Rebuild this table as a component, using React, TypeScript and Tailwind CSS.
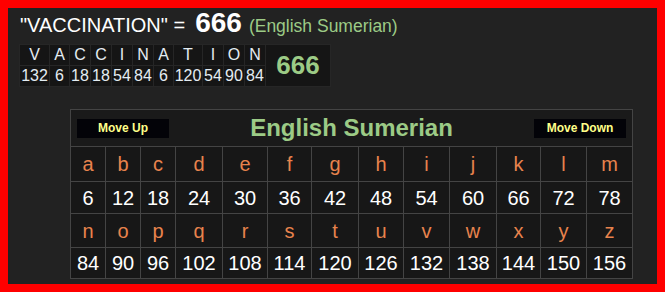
const word = [
  { ch: 'V', val: 132, w: 'w-[29px]' },
  { ch: 'A', val: 6, w: 'w-[19px]' },
  { ch: 'C', val: 18, w: 'w-[20px]' },
  { ch: 'C', val: 18, w: 'w-[20px]' },
  { ch: 'I', val: 54, w: 'w-[20px]' },
  { ch: 'N', val: 84, w: 'w-[20px]' },
  { ch: 'A', val: 6, w: 'w-[19px]' },
  { ch: 'T', val: 120, w: 'w-[28px]' },
  { ch: 'I', val: 54, w: 'w-[20px]' },
  { ch: 'O', val: 90, w: 'w-[20px]' },
  { ch: 'N', val: 84, w: 'w-[20px]' },
];

const letters = 'abcdefghijklmnopqrstuvwxyz'.split('');

function Letter({ ch }: { ch: string }) {
  return <div className="bg-[#171717] flex items-center justify-center text-[20px] text-[#e8834d]">{ch}</div>;
}

function Num({ n }: { n: number }) {
  return <div className="bg-[#171717] flex items-center justify-center text-[20px] text-white">{n}</div>;
}

export default function App() {
  const top = letters.slice(0, 13);
  const bottom = letters.slice(13);
  return (
    <div className="w-[665px] h-[292px] border-8 border-[#ff0000] bg-[#222222] font-['Liberation_Sans',Arial,sans-serif] overflow-hidden">
      <div className="h-[35px] pl-[12px] pt-[1px] flex items-baseline leading-none whitespace-nowrap">
        <span className="text-[20px] text-white">"VACCINATION" =</span>
        <span className="ml-[10px] text-[28px] font-bold text-white">666</span>
        <span className="ml-[7px] text-[17.5px] text-[#9ccb86]">(English Sumerian)</span>
      </div>

      <div className="ml-[11px] inline-flex bg-[#262626] p-px gap-px">
        <div className="flex flex-col gap-px">
          <div className="flex gap-px">
            {word.map((c, i) => (
              <div key={i} className={`${c.w} h-[20px] bg-[#151515] flex items-center justify-center text-[16px] text-[#e4ecf2]`}>{c.ch}</div>
            ))}
          </div>
          <div className="flex gap-px">
            {word.map((c, i) => (
              <div key={i} className={`${c.w} h-[20px] bg-[#151515] flex items-center justify-center text-[16px] text-[#e4ecf2]`}>{c.val}</div>
            ))}
          </div>
        </div>
        <div className="w-[64px] bg-[#151515] flex items-center justify-center text-[26px] font-bold text-[#9ccb86]">666</div>
      </div>

      <div className="ml-[62px] mt-[22px] w-[563px] bg-[#444444] p-px grid gap-px grid-cols-[34px_34px_34px_46px_44px_43px_46px_44px_45px_46px_43px_45px_45px] grid-rows-[36px_34px_31px_33px_30px]">
        <div className="col-span-13 bg-[#1a1a1a] flex items-center justify-between px-[6px]">
          <button className="w-[92px] h-[19px] bg-[#030308] text-[12px] font-bold text-[#ffff88]">Move Up</button>
          <span className="text-[24px] font-bold text-[#9ccb86]">English Sumerian</span>
          <button className="w-[92px] h-[19px] bg-[#030308] text-[12px] font-bold text-[#ffff88]">Move Down</button>
        </div>
        {top.map(ch => <Letter key={ch} ch={ch} />)}
        {top.map((ch, i) => <Num key={ch} n={(i + 1) * 6} />)}
        {bottom.map(ch => <Letter key={ch} ch={ch} />)}
        {bottom.map((ch, i) => <Num key={ch} n={(i + 14) * 6} />)}
      </div>
    </div>
  );
}
